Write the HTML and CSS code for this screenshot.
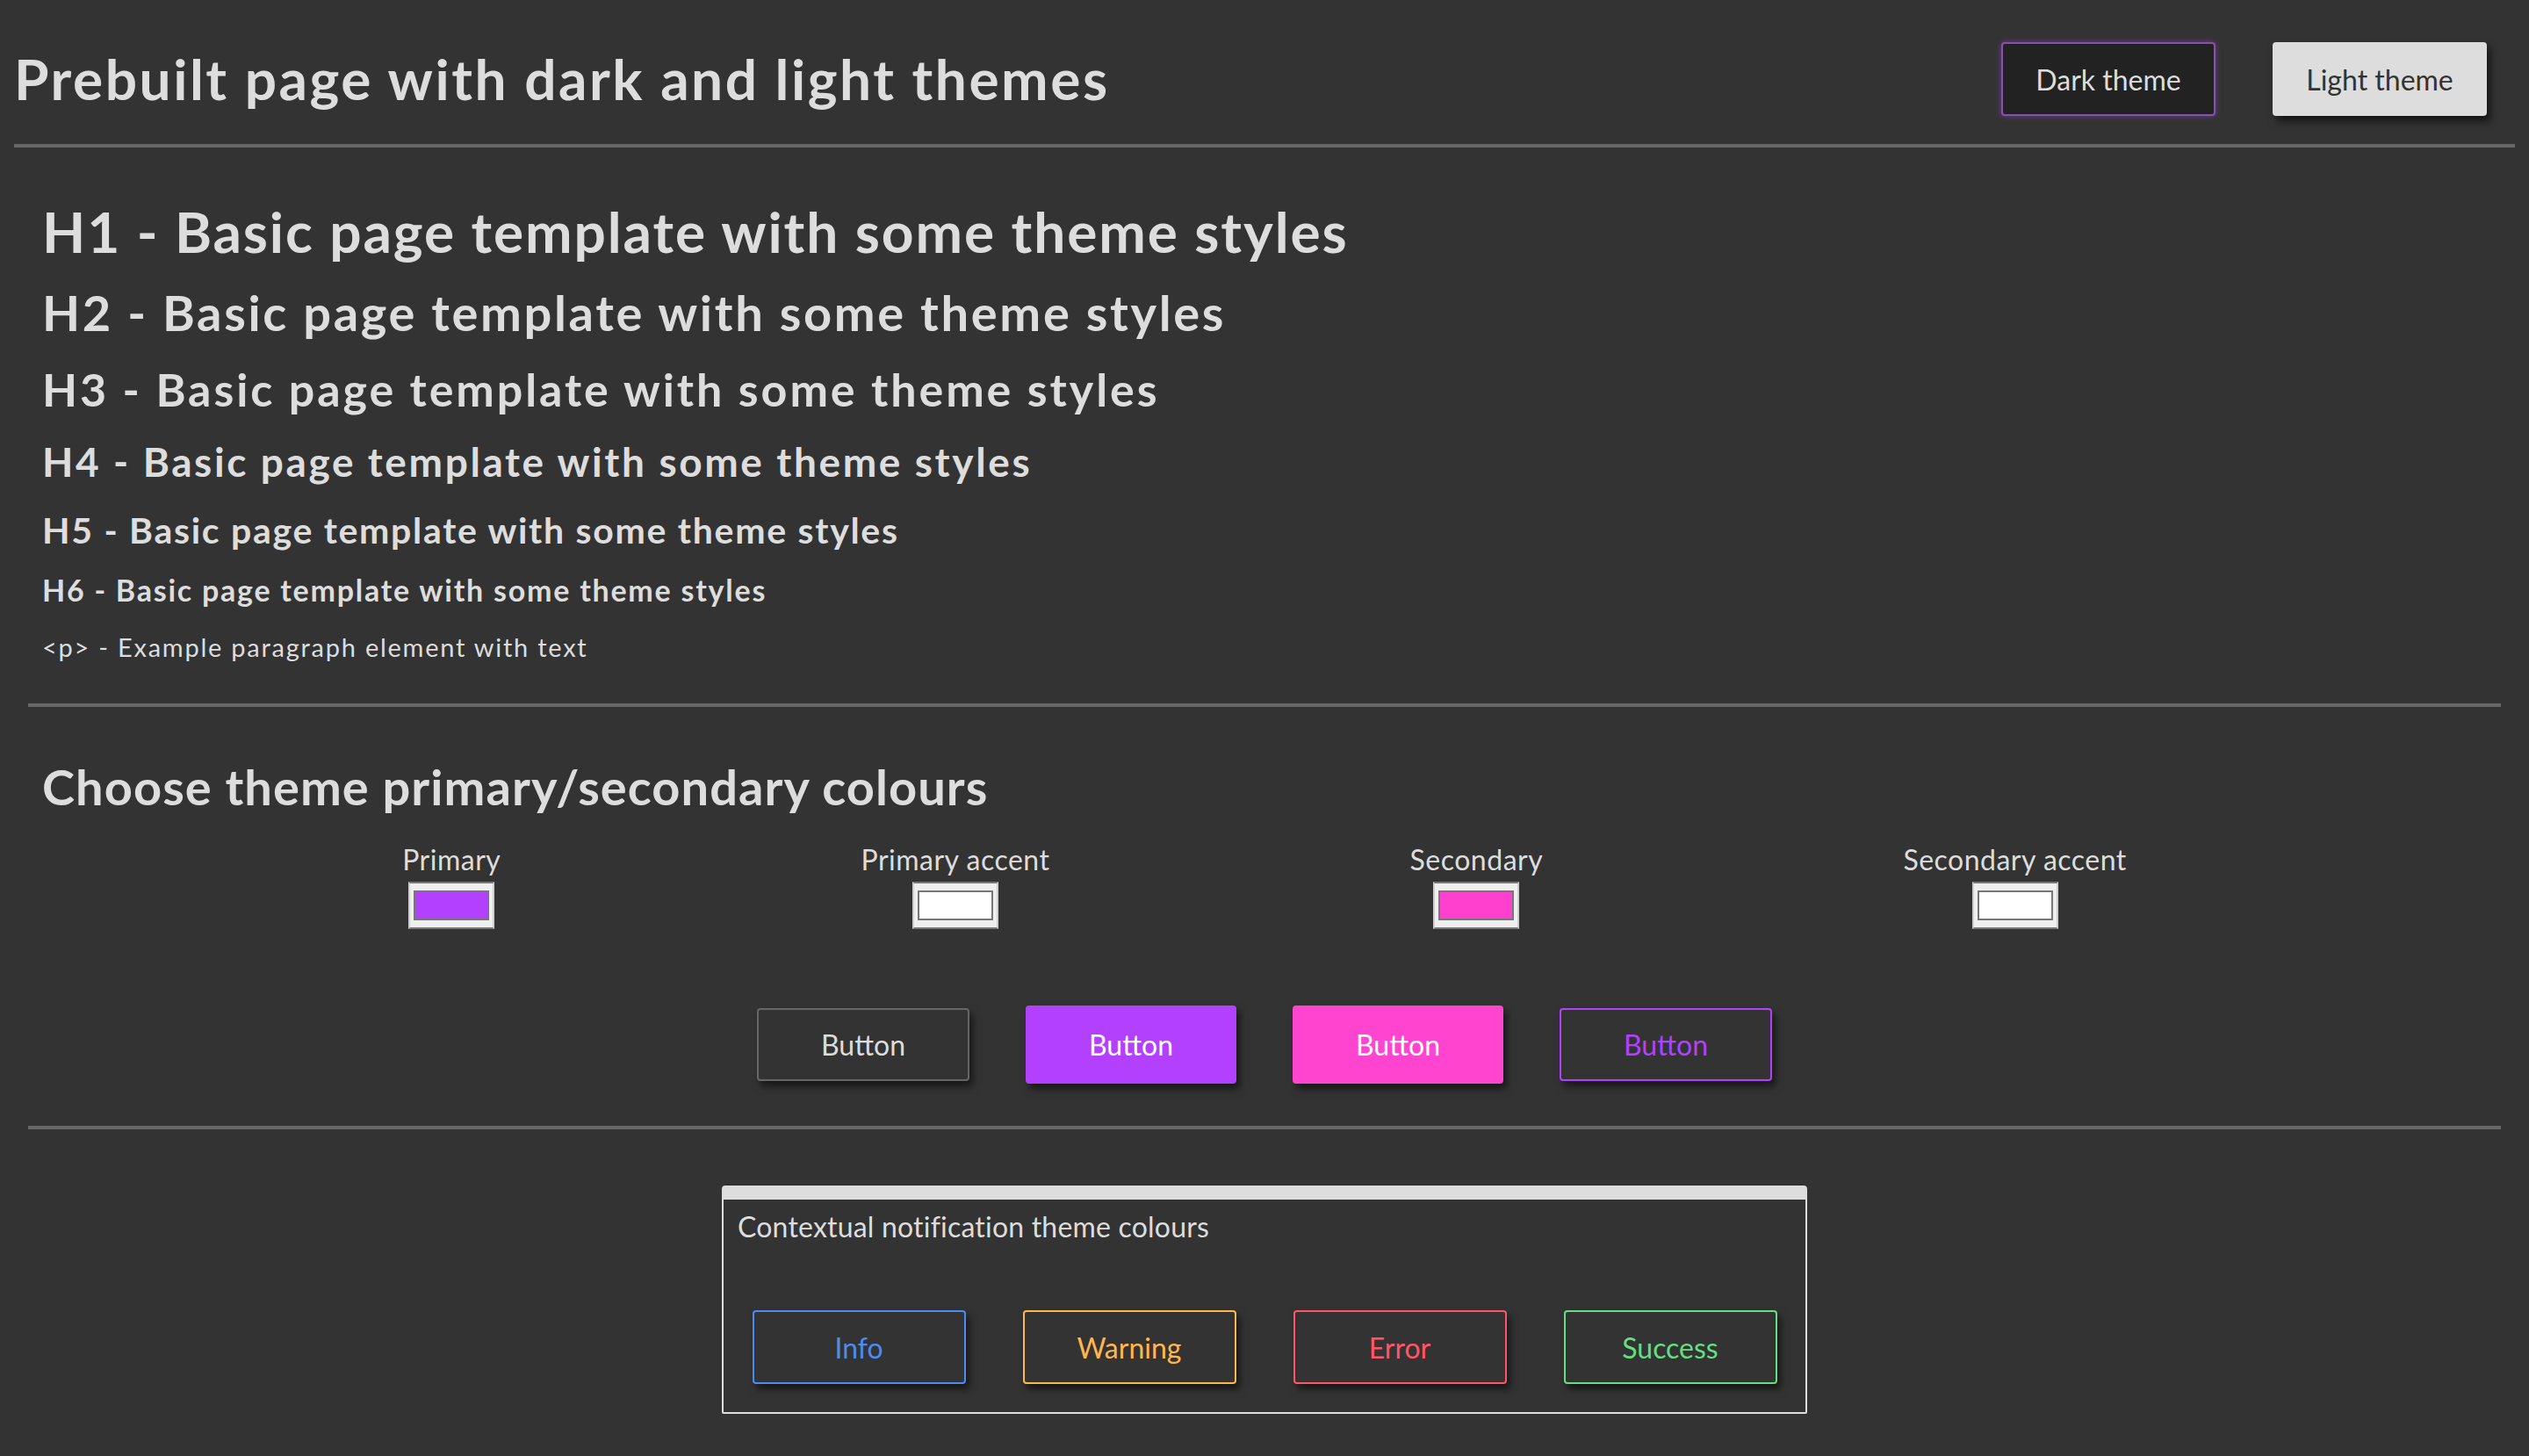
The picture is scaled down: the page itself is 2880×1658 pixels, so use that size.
FILE: index.html
```html
<!DOCTYPE html>
<html lang="en">
<head>
<meta charset="utf-8">
<title>Prebuilt page with dark and light themes</title>
<link rel="stylesheet" href="styles.css">
</head>
<body>
<header class="top">
  <div class="title">Prebuilt page with dark and light themes</div>
  <div class="theme-switch">
    <button class="theme-btn dark">Dark theme</button>
    <button class="theme-btn light">Light theme</button>
  </div>
</header>
<hr class="rule rule-top">
<main class="content">
  <section class="type">
    <h1 class="h h1">H1 - Basic page template with some theme styles</h1>
    <h2 class="h h2">H2 - Basic page template with some theme styles</h2>
    <h3 class="h h3">H3 - Basic page template with some theme styles</h3>
    <h4 class="h h4">H4 - Basic page template with some theme styles</h4>
    <h5 class="h h5">H5 - Basic page template with some theme styles</h5>
    <h6 class="h h6">H6 - Basic page template with some theme styles</h6>
    <p class="para">&lt;p&gt; - Example paragraph element with text</p>
  </section>
  <hr class="rule">
  <section class="colours">
    <h2 class="h choose">Choose theme primary/secondary colours</h2>
    <div class="pickers">
      <div class="picker"><span class="picker-label">Primary</span><span class="swatch"><span class="swatch-fill purple"></span></span></div>
      <div class="picker"><span class="picker-label">Primary accent</span><span class="swatch"><span class="swatch-fill white"></span></span></div>
      <div class="picker"><span class="picker-label">Secondary</span><span class="swatch"><span class="swatch-fill pink"></span></span></div>
      <div class="picker"><span class="picker-label">Secondary accent</span><span class="swatch"><span class="swatch-fill white"></span></span></div>
    </div>
    <div class="btn-row">
      <button class="btn btn-plain">Button</button>
      <button class="btn btn-primary">Button</button>
      <button class="btn btn-secondary">Button</button>
      <button class="btn btn-outline">Button</button>
    </div>
  </section>
  <hr class="rule">
  <section class="notify">
    <div class="notify-text">Contextual notification theme colours</div>
    <div class="notify-row">
      <button class="btn nbtn info">Info</button>
      <button class="btn nbtn warning">Warning</button>
      <button class="btn nbtn error">Error</button>
      <button class="btn nbtn success">Success</button>
    </div>
  </section>
</main>
</body>
</html>
```
FILE: styles.css
```css
* { box-sizing: border-box; }
html, body { margin: 0; padding: 0; }
body {
  background: #333333;
  color: #dddddd;
  font-family: "Lato", "Open Sans", sans-serif;
  font-size: 32px;
  line-height: 1.2;
  padding: 0 16px;
  min-height: 1658px;
}
button { font-family: inherit; font-size: 32px; cursor: pointer; }

.top {
  display: flex;
  align-items: center;
  justify-content: space-between;
  padding: 48px 32px 0 0;
}
.title { font-size: 64px; font-weight: 700; line-height: 1.2; letter-spacing: 2.5px; }
.theme-switch { display: flex; gap: 65px; }
.theme-btn {
  width: 244px;
  height: 84px;
  border-radius: 4px;
  font-size: 32px;
}
.theme-btn.dark {
  background: #222222;
  color: #dddddd;
  border: 2px solid #8a50ae;
  box-shadow: 0 0 6px rgba(179, 64, 255, 0.5);
}
.theme-btn.light {
  background: #dddddd;
  color: #333333;
  border: none;
  box-shadow: 4px 6px 10px rgba(0, 0, 0, 0.6);
}

.rule {
  border: 0;
  height: 4px;
  background: #666666;
  margin: 0;
}
.rule-top { margin-top: 32px; }

.content { padding: 0 16px; }
.type { padding: 0 16px; display: flex; flex-direction: column; }
.h { margin: 0; font-weight: 700; line-height: 1.2; }
.h1 { font-size: 64px; margin-top: 58px; letter-spacing: 1.9px; }
.h2 { font-size: 56px; margin-top: 19px; letter-spacing: 2.65px; }
.h3 { font-size: 52px; margin-top: 23px; letter-spacing: 2.9px; }
.h4 { font-size: 46px; margin-top: 24px; letter-spacing: 2.6px; }
.h5 { font-size: 41px; margin-top: 25px; letter-spacing: 1.7px; }
.h6 { font-size: 34px; margin-top: 24px; letter-spacing: 1.75px; }
.para { font-size: 29px; margin: 27px 0 47px; letter-spacing: 1.75px; }

.colours { padding: 0 16px; }
.choose { font-size: 56px; margin-top: 57px; letter-spacing: 1.05px; }
.pickers {
  display: flex;
  justify-content: space-evenly;
  margin-top: 30px;
}
.picker {
  display: flex;
  flex-direction: column;
  align-items: center;
  gap: 6px;
}
.picker-label { font-size: 32px; letter-spacing: 0.5px; }
.swatch {
  display: block;
  width: 98px;
  height: 54px;
  background: #efefef;
  border: 2px solid #cfcfcf;
  border-top-color: #777777;
  border-bottom-color: #777777;
  padding: 8px 4px;
}
.swatch-fill {
  display: block;
  width: 100%;
  height: 100%;
  border: 2px solid #777777;
}
.swatch-fill.purple { background: #b340ff; }
.swatch-fill.pink { background: #ff40cf; }
.swatch-fill.white { background: #ffffff; }

.btn-row {
  display: flex;
  justify-content: center;
  align-items: center;
  gap: 64px;
  height: 89px;
  margin: 87px 0 48px;
}
.btn {
  width: 242px;
  height: 83px;
  border-radius: 4px;
  background: #333333;
  color: #dddddd;
  border: 2px solid #666666;
  box-shadow: 4px 6px 8px rgba(0, 0, 0, 0.55);
  padding: 0;
}
.btn-primary, .btn-secondary {
  width: 240px;
  height: 89px;
  border: none;
  color: #ffffff;
}
.btn-primary { background: #b340ff; }
.btn-secondary { background: #ff44cf; }
.btn-outline { border-color: #b340ff; color: #b340ff; }

.notify {
  width: 1236px;
  margin: 64px auto 0;
  border: 2px solid #dddddd;
  border-top: 16px solid #dddddd;
  border-radius: 4px 4px 2px 2px;
  padding: 12px 0 32px;
}
.notify-text { padding-left: 16px; font-size: 32px; letter-spacing: 0.2px; }
.notify-row {
  display: flex;
  justify-content: space-around;
  margin-top: 76px;
}
.nbtn { width: 243px; height: 84px; }
.nbtn.info { border-color: #4b8bf5; color: #4b8bf5; }
.nbtn.warning { border-color: #ffb74d; color: #ffb74d; }
.nbtn.error { border-color: #ff5566; color: #ff5566; }
.nbtn.success { border-color: #66dd80; color: #66dd80; }
```
